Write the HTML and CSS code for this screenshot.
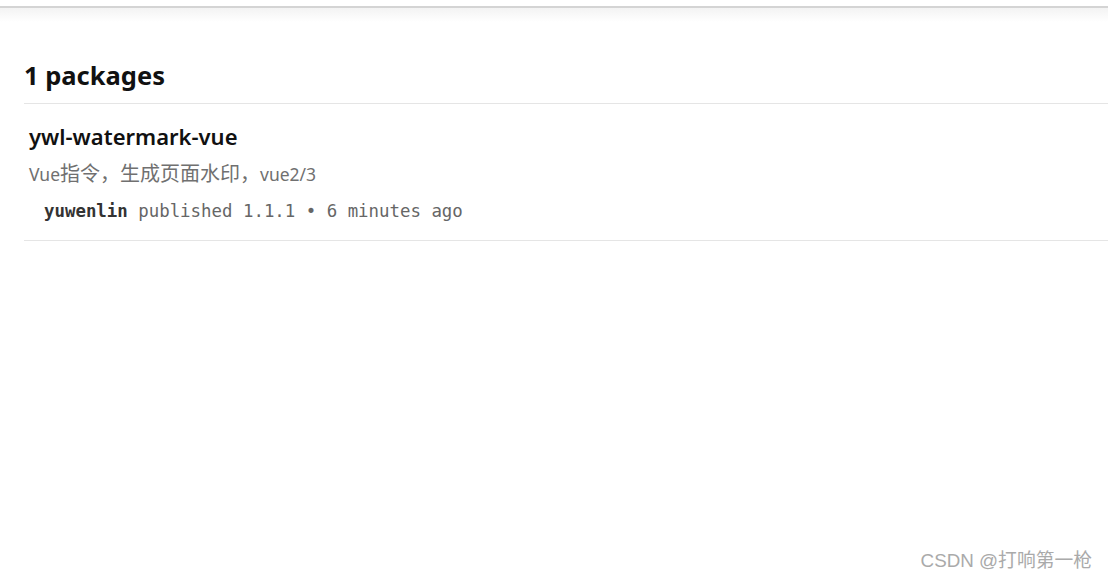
FILE: index.html
```html
<!DOCTYPE html>
<html lang="zh">
<head>
<meta charset="utf-8">
<title>packages</title>
<link rel="stylesheet" href="styles.css">
</head>
<body>
<div class="topbar"></div>
<div class="shade"></div>
<main class="content">
  <h2 class="count">1 packages</h2>
  <ul class="list">
    <li class="pkg">
      <h3 class="pkg-name">ywl-watermark-vue</h3>
      <p class="pkg-desc"><span class="lat">Vue</span>指令，生成页面水印，<span class="lat">vue2/3</span></p>
      <div class="pkg-meta"><span class="author">yuwenlin</span> published 1.1.1 • 6 minutes ago</div>
    </li>
  </ul>
</main>
<div class="watermark">CSDN @打响第一枪</div>
</body>
</html>
```
FILE: styles.css
```css
html, body {
  margin: 0;
  padding: 0;
  background: #fff;
  height: 100%;
}
body {
  font-family: "Noto Sans", "Noto Sans CJK SC", sans-serif;
  color: #111;
  position: relative;
  overflow: hidden;
}
.topbar {
  height: 6px;
  background: #fff;
  border-bottom: 2px solid #d4d4d4;
}
.shade {
  height: 14px;
  background: linear-gradient(#f3f3f3, #ffffff);
}
.content {
  padding-left: 24px;
}
.count {
  margin: 0;
  padding-top: 37px;
  font-size: 25.5px;
  font-weight: 700;
  line-height: 32px;
  padding-bottom: 12px;
  border-bottom: 1px solid #e5e5e5;
  color: #111;
}
.list {
  list-style: none;
  margin: 0;
  padding: 0;
}
.pkg {
  padding: 18px 0 16px 5px;
  border-bottom: 1px solid #e5e5e5;
}
.pkg-name {
  margin: 0;
  font-size: 22px;
  font-weight: 600;
  line-height: 28px;
  color: #111;
}
.pkg-desc {
  margin: 11px 0 0;
  font-size: 20px;
  line-height: 26px;
  color: #707070;
}
.pkg-desc .lat {
  font-size: 17.5px;
}
.pkg-meta {
  margin-top: 11px;
  padding-left: 15px;
  font-family: "DejaVu Sans Mono", monospace;
  font-size: 17.4px;
  line-height: 26px;
  color: #666;
}
.author {
  font-weight: 700;
  color: #333;
}
.watermark {
  position: absolute;
  right: 16px;
  bottom: 8px;
  font-family: "Liberation Sans", "Noto Sans CJK SC", sans-serif;
  font-size: 18.8px;
  color: #aaa;
}
```
